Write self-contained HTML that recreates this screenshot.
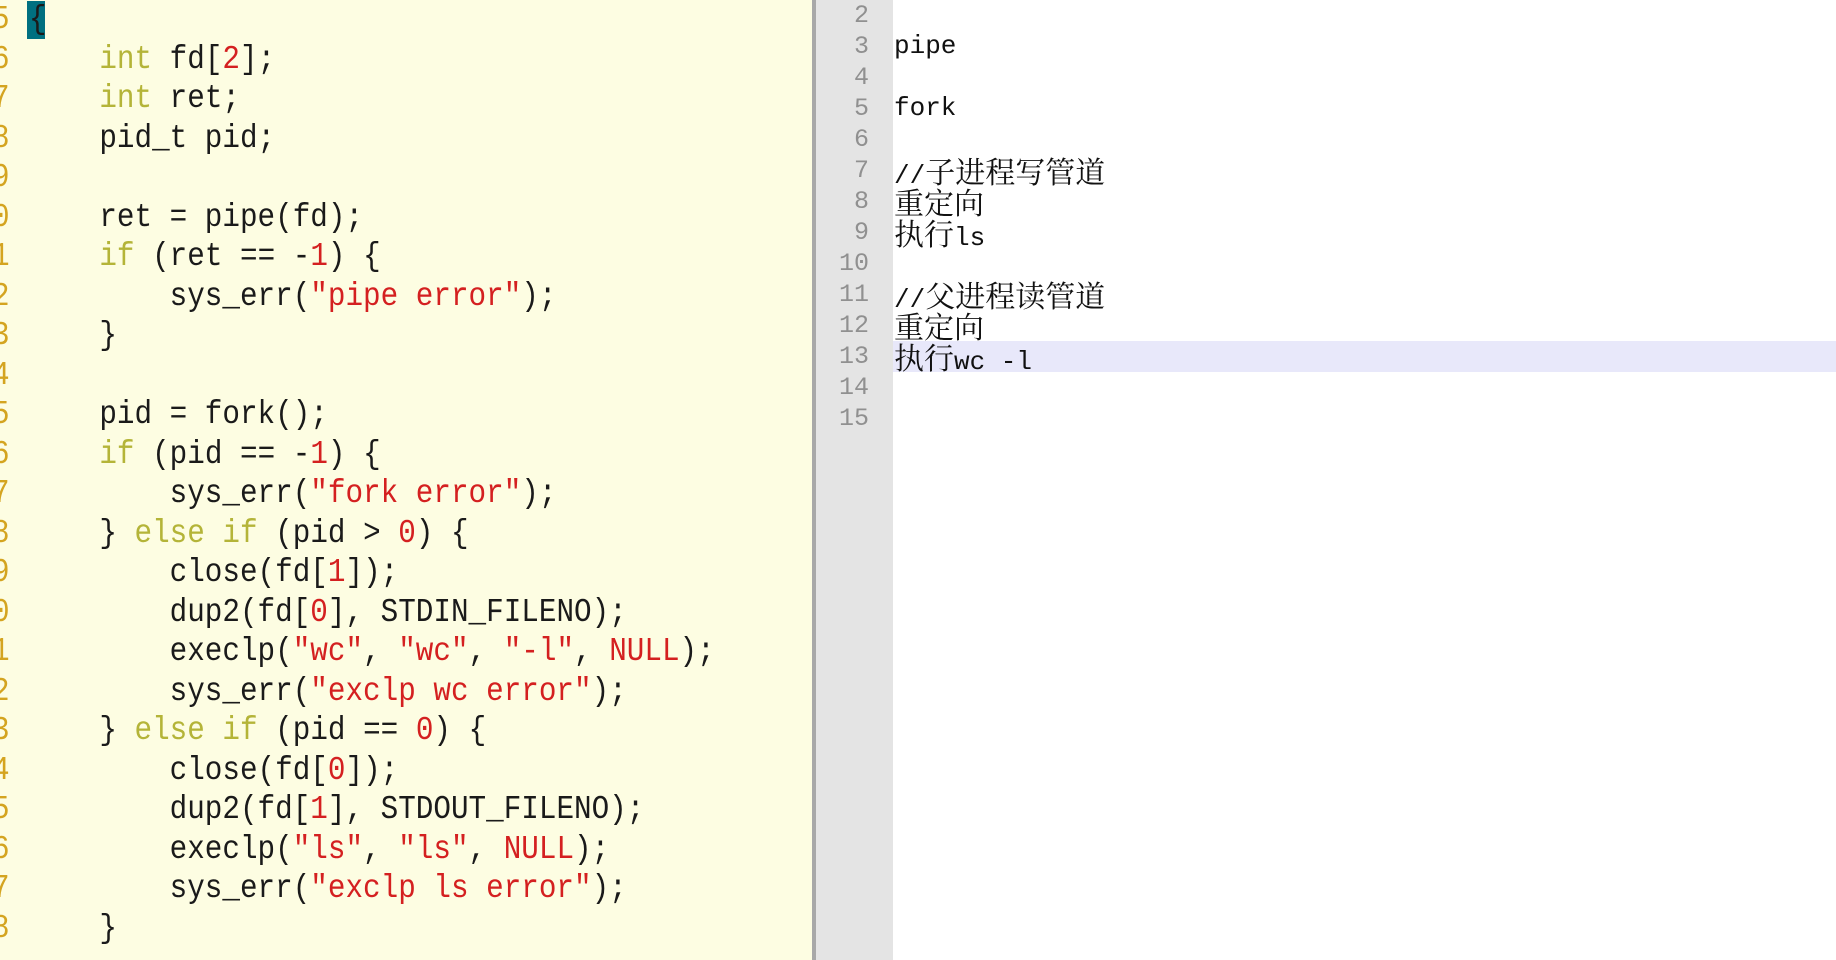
<!DOCTYPE html>
<html><head><meta charset="utf-8"><style>
html,body{margin:0;padding:0;width:1836px;height:960px;overflow:hidden;background:#fff}
#left{position:absolute;left:0;top:0;width:812px;height:960px;background:#fdfde2}
#div{position:absolute;left:812px;top:0;width:4px;height:960px;background:#a8a8a8}
#gut{position:absolute;left:816px;top:0;width:77px;height:960px;background:#e4e4e4}
.l{position:absolute;left:0;height:40px;line-height:40px;font-family:"Liberation Mono",monospace;font-size:29.3px;color:#1a1a1a;white-space:pre;transform:scaleY(1.15);transform-origin:left center}
.n{position:absolute;left:-8px;color:#d4a420;font-family:"Liberation Mono",monospace;font-size:29.3px;line-height:40px;height:40px;transform:scaleY(1.15)}
.k{color:#b4b438}.r{color:#d42020}
.rn{position:absolute;left:816px;width:53px;text-align:right;font-family:"Liberation Mono",monospace;font-size:25px;color:#909090;height:31px;line-height:31px}
.rt{position:absolute;left:894px;font-family:"Liberation Mono","Noto Sans CJK SC",monospace;font-size:26px;color:#111;height:31px;line-height:31px;white-space:pre}
.c{font-family:"Noto Serif CJK SC","Noto Sans CJK SC",serif;font-size:30px}
#hl{position:absolute;left:893px;top:341px;width:943px;height:31px;background:#e8e8fa}
#cur{position:absolute;left:27px;top:1px;width:18px;height:38px;background:#007080}
</style></head><body>
<div id="left"></div>
<div id="cur"></div>
<div id="div"></div><div id="gut"></div><div id="hl"></div>
<div id="code"></div>
<script>
var L=[
['5','{'],
['6','    <span class="k">int</span> fd[<span class="r">2</span>];'],
['7','    <span class="k">int</span> ret;'],
['8','    pid_t pid;'],
['9',''],
['0','    ret = pipe(fd);'],
['1','    <span class="k">if</span> (ret == -<span class="r">1</span>) {'],
['2','        sys_err(<span class="r">"pipe error"</span>);'],
['3','    }'],
['4',''],
['5','    pid = fork();'],
['6','    <span class="k">if</span> (pid == -<span class="r">1</span>) {'],
['7','        sys_err(<span class="r">"fork error"</span>);'],
['8','    } <span class="k">else if</span> (pid &gt; <span class="r">0</span>) {'],
['9','        close(fd[<span class="r">1</span>]);'],
['0','        dup2(fd[<span class="r">0</span>], STDIN_FILENO);'],
['1','        execlp(<span class="r">"wc"</span>, <span class="r">"wc"</span>, <span class="r">"-l"</span>, <span class="r">NULL</span>);'],
['2','        sys_err(<span class="r">"exclp wc error"</span>);'],
['3','    } <span class="k">else if</span> (pid == <span class="r">0</span>) {'],
['4','        close(fd[<span class="r">0</span>]);'],
['5','        dup2(fd[<span class="r">1</span>], STDOUT_FILENO);'],
['6','        execlp(<span class="r">"ls"</span>, <span class="r">"ls"</span>, <span class="r">NULL</span>);'],
['7','        sys_err(<span class="r">"exclp ls error"</span>);'],
['8','    }']];
var h='';
for(var i=0;i<L.length;i++){var t=i*39.5;
h+='<div class="n" style="top:'+t+'px">'+L[i][0]+'</div>';
h+='<div class="l" style="left:29px;top:'+t+'px">'+L[i][1]+'</div>';}
var R=['','pipe','','fork','','//<span class="c">子进程写管道</span>','<span class="c">重定向</span>','<span class="c">执行</span>ls','','//<span class="c">父进程读管道</span>','<span class="c">重定向</span>','<span class="c">执行</span>wc -l','',''];
for(var j=0;j<R.length;j++){var t=j*31;
h+='<div class="rn" style="top:'+t+'px">'+(j+2)+'</div>';
h+='<div class="rt" style="top:'+t+'px">'+R[j]+'</div>';}
document.getElementById('code').innerHTML=h;
</script>
</body></html>
